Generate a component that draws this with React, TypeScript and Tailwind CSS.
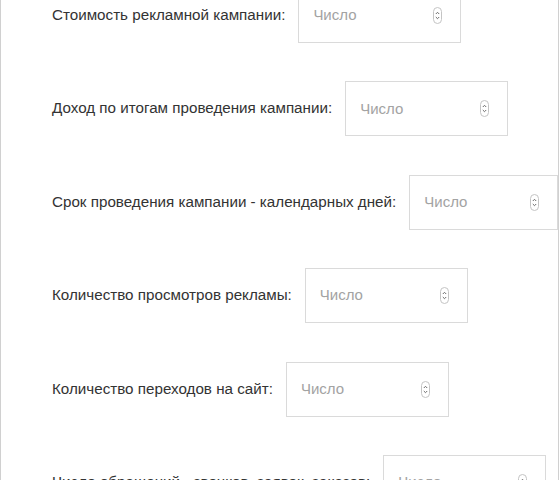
import React from "react";

const FIELDS = [
  "Стоимость рекламной кампании:",
  "Доход по итогам проведения кампании:",
  "Срок проведения кампании - календарных дней:",
  "Количество просмотров рекламы:",
  "Количество переходов на сайт:",
  "Число обращений - звонков, заявок, заказов:",
];

const Spinner: React.FC = () => (
  <svg width="9" height="17" viewBox="0 0 9 17" className="shrink-0">
    <rect x="0.5" y="0.5" width="8" height="16" rx="4" fill="white" stroke="#c4c4c4" />
    <path d="M2.8 7 L4.5 5.3 L6.2 7" fill="none" stroke="#6b6b6b" strokeWidth="1" />
    <path d="M2.8 10 L4.5 11.7 L6.2 10" fill="none" stroke="#6b6b6b" strokeWidth="1" />
  </svg>
);

const NumberField: React.FC<{ label: string }> = ({ label }) => (
  <div className="flex items-center h-[55px] mb-[38.4px]">
    <label className="text-[15.2px] text-[#333] whitespace-nowrap mr-[13px]">{label}</label>
    <div className="flex items-center justify-between w-[163px] h-[55px] border border-[#dadada] pl-[14px] pr-[18px]">
      <span className="text-[15px] text-[#a3a3a3]">Число</span>
      <Spinner />
    </div>
  </div>
);

export default function App() {
  return (
    <div
      className="w-[559px] h-[480px] overflow-hidden border-x border-[#d0d0d0] bg-white"
      style={{ fontFamily: '"Liberation Sans", Arial, sans-serif' }}
    >
      <div className="pl-[51px] mt-[-12px]">
        {FIELDS.map((f) => (
          <NumberField key={f} label={f} />
        ))}
      </div>
    </div>
  );
}
